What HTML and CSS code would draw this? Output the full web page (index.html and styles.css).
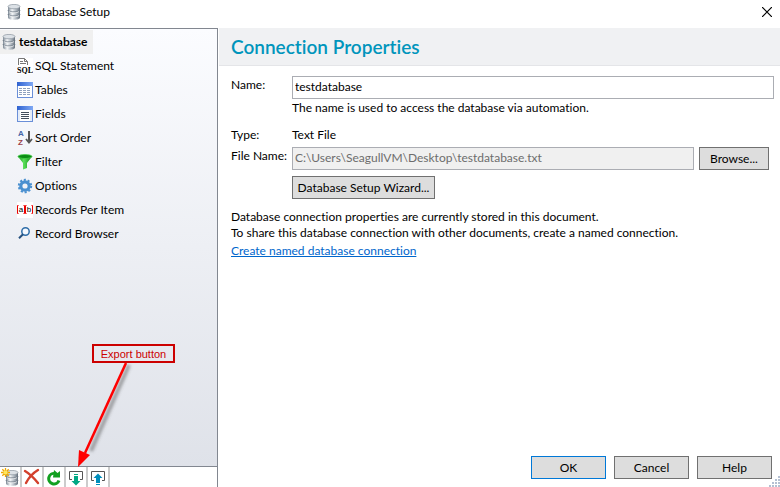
FILE: index.html
```html
<!DOCTYPE html>
<html lang="en">
<head>
    <meta charset="UTF-8">
    <meta name="viewport" content="width=device-width, initial-scale=1.0">
    <title>Database Setup</title>
    <link rel="stylesheet" href="styles.css">
</head>
<body>
    <!-- shared icon parts -->
    <svg class="defs" width="0" height="0" aria-hidden="true">
        <defs>
            <linearGradient id="metal">
                <stop offset="0" stop-color="#7e8a96"/>
                <stop offset="0.35" stop-color="#f4f6f8"/>
                <stop offset="0.65" stop-color="#b4bcc4"/>
                <stop offset="1" stop-color="#66717d"/>
            </linearGradient>
            <linearGradient id="green">
                <stop offset="0" stop-color="#0c8f14"/>
                <stop offset="0.4" stop-color="#5be05b"/>
                <stop offset="1" stop-color="#0a8a10"/>
            </linearGradient>
            <linearGradient id="bar">
                <stop offset="0" stop-color="#2f62d0"/>
                <stop offset="1" stop-color="#7fa8f4"/>
            </linearGradient>
            <filter id="soft" x="-20%" y="-20%" width="140%" height="140%">
                <feGaussianBlur stdDeviation="1.5"/>
            </filter>
            <symbol id="db" viewBox="0 0 16 16">
                <path d="M2 3v10.500c0 1.300 2.600 2.300 6 2.300s6-1 6-2.300V3z" fill="url(#metal)"/>
                <path d="M2 6c0 1.200 2.600 2 6 2s6-.8 6-2M2 10c0 1.200 2.600 2 6 2s6-.8 6-2" fill="none" stroke="#6d7985" stroke-width="1"/>
                <path d="M3 7.500c1 .9 3 1.300 5 1.300s4-.4 5-1.300M3 11.500c1 .9 3 1.300 5 1.300s4-.4 5-1.300" fill="none" stroke="#fff" stroke-width=".7"/>
                <ellipse cx="8" cy="2.600" rx="6" ry="2.200" fill="#dce1e6" stroke="#8a949e" stroke-width=".7"/>
            </symbol>
        </defs>
    </svg>

    <header class="titlebar">
        <svg class="icon" width="16" height="16"><use href="#db"/></svg>
        <span class="title">Database Setup</span>
        <button class="close" aria-label="Close">
            <svg width="10" height="10" viewBox="0 0 10 10"><path d="M0 0l10 10M10 0L0 10" stroke="#000" stroke-width="1.200"/></svg>
        </button>
    </header>

    <main>
        <aside>
            <nav class="tree">
                <a class="root" href="#"><svg class="icon" width="16" height="16"><use href="#db"/></svg>testdatabase</a>
                <ul>
                    <li><a href="#">
                        <svg class="icon" width="16" height="16" viewBox="0 0 16 16">
                            <rect width="16" height="16" fill="#fff"/>
                            <path d="M1.500 7V.5h6l3 3V7M7.500.5v3h3M3 3.500h3M3 5.500h6" fill="none" stroke="#777"/>
                            <text class="sql" x="0" y="15">SQL</text>
                        </svg>SQL Statement</a></li>
                    <li><a href="#">
                        <svg class="icon" width="16" height="16" viewBox="0 0 16 16">
                            <rect x=".5" y=".5" width="15" height="15" fill="#fff" stroke="#6a8fd8"/>
                            <rect width="16" height="4" fill="url(#bar)"/>
                            <path d="M2 6.500h3M6 6.500h3M10 6.500h3M2 8.500h3M6 8.500h3M10 8.500h3M2 10.500h3M6 10.500h3M10 10.500h3M2 12.500h3M6 12.500h3M10 12.500h3" stroke="#8ea0bd"/>
                        </svg>Tables</a></li>
                    <li><a href="#">
                        <svg class="icon" width="16" height="16" viewBox="0 0 16 16">
                            <rect x=".5" y=".5" width="15" height="15" fill="#e4ecf8" stroke="#6a8fd8"/>
                            <rect width="16" height="4" fill="url(#bar)"/>
                            <rect x="3" y="4" width="10" height="11" fill="#fff"/>
                            <path d="M4 6.500h8M4 8.500h8M4 10.500h8M4 12.500h8" stroke="#444f5c"/>
                        </svg>Fields</a></li>
                    <li><a href="#">
                        <svg class="icon" width="16" height="16" viewBox="0 0 16 16">
                            <text class="sort" x="1" y="6" fill="#4566a8">A</text>
                            <text class="sort" x="1" y="15" fill="#9b4048">Z</text>
                            <path d="M12 1v11" stroke="#555" stroke-width="2"/>
                            <path d="M9 9l3 3.500L15 9" fill="none" stroke="#555" stroke-width="1.800"/>
                        </svg>Sort Order</a></li>
                    <li><a href="#">
                        <svg class="icon" width="16" height="16" viewBox="0 0 16 16">
                            <path d="M1 2.500L6 9v6.500l4-1.500V9l5-6.500z" fill="url(#green)"/>
                            <ellipse cx="8" cy="2.500" rx="7" ry="2" fill="#0a8c14" stroke="#47cf4b" stroke-width=".8"/>
                        </svg>Filter</a></li>
                    <li><a href="#">
                        <svg class="icon" width="16" height="16" viewBox="0 0 16 16">
                            <circle cx="8" cy="8" r="6.200" fill="none" stroke="#4a90d0" stroke-width="2" stroke-dasharray="2.100 1.796"/>
                            <circle cx="8" cy="8" r="4.200" fill="none" stroke="#4a90d0" stroke-width="3.200"/>
                        </svg>Options</a></li>
                    <li><a href="#">
                        <svg class="icon" width="16" height="16" viewBox="0 0 16 16">
                            <rect width="16" height="16" fill="#fff"/>
                            <path d="M1.500 3.500H.5v8h1M6.500 3.500h1v8h-1M9.500 3.500h-1v8h1M14.500 3.500h1v8h-1" fill="none" stroke="#e00"/>
                            <text class="ab" x="4" y="10">a</text>
                            <text class="ab" x="12" y="10">b</text>
                        </svg>Records Per Item</a></li>
                    <li><a href="#">
                        <svg class="icon" width="16" height="16" viewBox="0 0 16 16">
                            <circle cx="8.500" cy="5.500" r="3.700" fill="#f5f9ff" stroke="#2e6da8" stroke-width="1.500"/>
                            <path d="M6 8.200L2 12.200" stroke="#24507e" stroke-width="2"/>
                        </svg>Record Browser</a></li>
                </ul>
            </nav>
            <div class="toolbar">
                <button aria-label="New database">
                    <svg width="18" height="18" viewBox="0 0 18 18">
                        <use href="#db" x="3" y="2" width="16" height="16"/>
                        <path d="M4.500 0v9M0 4.500h9M1.300 1.300l6.400 6.400M7.700 1.300L1.300 7.700" stroke="#f0a800" stroke-width="1.300"/>
                        <circle cx="4.500" cy="4.500" r="2" fill="#ffe75a"/>
                    </svg>
                </button>
                <button aria-label="Delete">
                    <svg width="18" height="18" viewBox="0 0 18 18">
                        <path d="M2 3c5 3 9 7 13 12M15 2C10 5 6 9 3 15" fill="none" stroke="#d3402c" stroke-width="2.400" stroke-linecap="round"/>
                    </svg>
                </button>
                <button aria-label="Refresh">
                    <svg width="18" height="18" viewBox="0 0 18 18">
                        <path d="M14 12.500A5.300 5.300 0 1 1 10 5.500" fill="none" stroke="#12a020" stroke-width="3"/>
                        <path d="M8 9.500h7V3L12.500 5 9 2z" fill="#12a020"/>
                    </svg>
                </button>
                <button aria-label="Export">
                    <svg width="18" height="18" viewBox="0 0 18 18">
                        <path d="M5 11.500H2.500v-8h13v8H13" fill="none" stroke="#555"/>
                        <path d="M7 6h4v1H7zM7 8h4v5h2.500L9 17.500 4.500 13H7z" fill="#00a884"/>
                    </svg>
                </button>
                <button aria-label="Import">
                    <svg width="18" height="18" viewBox="0 0 18 18">
                        <path d="M5 12.500H2.500v-9h13v9H13" fill="none" stroke="#555"/>
                        <path d="M7 16h4v1H7zM7 15h4v-5h2.500L9 5.500 4.500 10H7z" fill="#008ebc"/>
                    </svg>
                </button>
            </div>
        </aside>

        <section class="content">
            <h1>Connection Properties</h1>
            <form class="props">
                <label for="name">Name:</label>
                <div class="field">
                    <input type="text" id="name" value="testdatabase">
                    <p class="hint">The name is used to access the database via automation.</p>
                </div>
                <span>Type:</span>
                <span>Text File</span>
                <label for="file">File Name:</label>
                <div class="file-row">
                    <input type="text" id="file" value="C:\Users\SeagullVM\Desktop\testdatabase.txt" disabled>
                    <button type="button" class="btn browse">Browse...</button>
                </div>
                <button type="button" class="btn wizard">Database Setup Wizard...</button>
            </form>
            <div class="info">
                <p>Database connection properties are currently stored in this document.</p>
                <p>To share this database connection with other documents, create a named connection.</p>
                <a href="#">Create named database connection</a>
            </div>
            <footer>
                <button class="btn ok">OK</button>
                <button class="btn">Cancel</button>
                <button class="btn">Help</button>
            </footer>
        </section>
    </main>

    <svg class="grip" width="11" height="11" viewBox="0 0 11 11">
        <path d="M9 1h2M6 4h2M9 4h2M3 7h2M6 7h2M9 7h2M0 10h2M3 10h2M6 10h2M9 10h2" stroke="#b4c0d2" stroke-width="2"/>
    </svg>

    <!-- callout drawn over the window -->
    <div class="callout">
        <span class="callout-text">Export button</span>
        <svg class="arrow" width="66" height="105" viewBox="0 0 66 105">
            <path d="M52 2L14 88" stroke="#555" stroke-opacity=".5" stroke-width="4" filter="url(#soft)"/>
            <path d="M49 0L8 90" stroke="#f00" stroke-width="2.500"/>
            <path d="M1 104L2 87l11 5z" fill="#f00"/>
        </svg>
    </div>
</body>
</html>
```
FILE: styles.css
```css
* {
    box-sizing: border-box;
}
body {
    display: flex;
    flex-direction: column;
    position: relative;
    height: 100vh;
    margin: 0;
    background-color: #fff;
    color: #000;
    font-family: Lato, "Open Sans", sans-serif;
    font-size: 12px;
    font-variant-ligatures: none;
    line-height: 16px;
}
p, ul, h1 {
    margin: 0;
    padding: 0;
}
button, input {
    font: inherit;
    color: inherit;
    border-radius: 0;
}
.defs {
    position: absolute;
}
.icon {
    flex: none;
}

/* title bar */
.titlebar {
    display: flex;
    align-items: center;
    height: 28px;
    padding: 0 8px 4px 6px;
}
.title {
    flex: 1;
    margin-left: 5px;
}
.close {
    display: flex;
    padding: 0;
    border: none;
    background: none;
}

main {
    display: flex;
    flex: 1;
}

/* left pane */
aside {
    display: flex;
    flex-direction: column;
    width: 218px;
    border-top: 1px solid #828790;
    border-right: 1px solid #828790;
}
.tree {
    flex: 1;
    padding-top: 1px;
    background: linear-gradient(#fbfcff, #dfe2e9);
}
.tree ul {
    list-style: none;
}
.tree a {
    display: flex;
    align-items: center;
    gap: 2px;
    height: 24px;
    padding-left: 17px;
    color: #000;
    text-decoration: none;
}
.tree .root {
    width: 93px;
    padding-left: 1px;
    background-color: #f0f0f0;
    font-weight: bold;
}
.sql {
    font: bold 8px "Liberation Serif", serif;
}
.sort {
    font: bold 8px "Liberation Sans", sans-serif;
}
.ab {
    font: 8px "Liberation Sans", sans-serif;
    text-anchor: middle;
}
.toolbar {
    display: flex;
    height: 21px;
    border-top: 1px solid #828790;
}
.toolbar button {
    display: flex;
    width: 22px;
    padding: 1px;
    border: none;
    border-right: 2px solid #ccc;
    background-color: #fff;
}

/* right pane */
.content {
    display: flex;
    flex: 1;
    flex-direction: column;
    padding-left: 1px;
}
h1 {
    height: 38px;
    padding-left: 12px;
    border-bottom: 1px solid #e4e5e8;
    background-color: #f0f1f3;
    color: #0095bc;
    font-size: 19px;
    font-weight: 600;
    line-height: 38px;
}
.props {
    display: grid;
    grid-template-columns: 61px 1fr;
    padding: 10px 6px 0 12px;
    row-gap: 4px;
}
.props label {
    padding-top: 1px;
}
input {
    display: block;
    width: 100%;
    height: 23px;
    padding: 0 2px 2px;
    border: 1px solid #abadb3;
    background-color: #fff;
}
input:disabled {
    background-color: #f0f0f0;
    color: #6d6d6d;
}
.field {
    margin-bottom: 7px;
}
.hint {
    margin-top: 1px;
}
.file-row {
    display: flex;
    gap: 5px;
    padding-right: 5px;
}
.btn {
    width: 75px;
    height: 23px;
    padding: 0;
    border: 1px solid #707070;
    background-color: #ddd;
}
.browse {
    flex: none;
    width: 70px;
}
.wizard {
    grid-column: 2;
    width: 143px;
    margin-top: 2px;
}
.info {
    padding: 10px 12px;
}
.info a {
    display: inline-block;
    margin-top: 2px;
    color: #0066cc;
}
footer {
    display: flex;
    justify-content: flex-end;
    gap: 8px;
    margin-top: auto;
    padding: 0 8px 8px;
}
.ok {
    border-color: #0078d7;
}
.grip {
    position: absolute;
    right: 0;
    bottom: 0;
}

/* callout */
.callout {
    position: absolute;
    left: 77px;
    bottom: 19px;
}
.callout-text {
    display: block;
    width: 83px;
    height: 19px;
    margin-left: 15px;
    border: 2px solid #c00;
    color: #c00;
    font-family: "Liberation Sans", Arial, sans-serif;
    font-size: 11px;
    line-height: 16px;
    text-align: center;
}
.arrow {
    display: block;
}
```
